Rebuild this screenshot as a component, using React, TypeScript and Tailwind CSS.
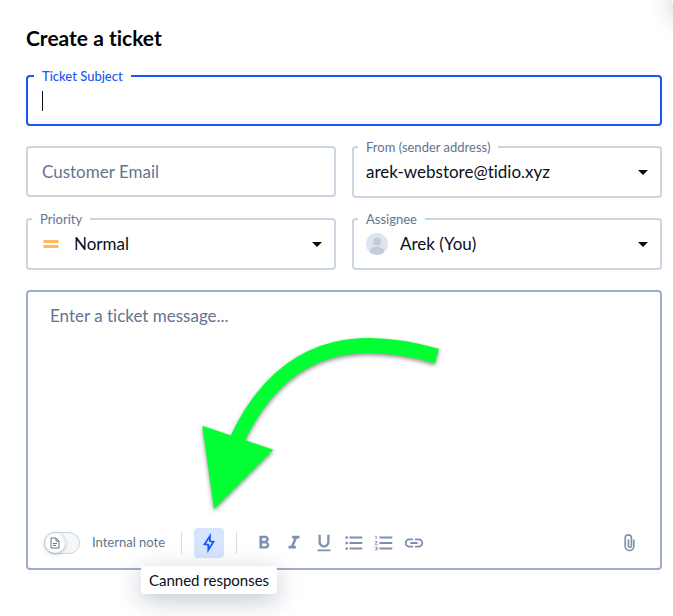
import { useId, useState } from 'react'
import type { ReactNode } from 'react'
import {
  MdFormatBold,
  MdFormatItalic,
  MdFormatListBulleted,
  MdFormatListNumbered,
  MdFormatUnderlined,
  MdLink,
} from 'react-icons/md'

const FORMAT_ACTIONS = [
  { label: 'Bold', Icon: MdFormatBold },
  { label: 'Italic', Icon: MdFormatItalic },
  { label: 'Underline', Icon: MdFormatUnderlined },
  { label: 'Bulleted list', Icon: MdFormatListBulleted },
  { label: 'Numbered list', Icon: MdFormatListNumbered },
  { label: 'Insert link', Icon: MdLink },
]

type SelectFieldProps = {
  label: string
  options: string[]
  icon?: ReactNode
}

function SelectField({ label, options, icon }: SelectFieldProps) {
  const id = useId()
  const [value, setValue] = useState(options[0])

  return (
    <fieldset className="min-w-0 rounded border-2 border-[#cbd5e1]">
      <legend className="ml-1 px-2 text-[13px] leading-4 text-[#647491]">
        <label htmlFor={id}>{label}</label>
      </legend>
      <div className="relative flex h-[41px] items-center pb-2 pl-3">
        {icon}
        <select
          id={id}
          value={value}
          onChange={(event) => setValue(event.target.value)}
          className="h-full min-w-0 flex-1 appearance-none bg-transparent pr-10 text-[17px] text-[#080f1a] outline-none"
        >
          {options.map((option) => (
            <option key={option}>{option}</option>
          ))}
        </select>
        <svg viewBox="0 0 10 5" className="pointer-events-none absolute right-3 top-[15px] h-[5px] w-[10px] fill-[#080f1a]" aria-hidden="true">
          <path d="M0 0h10L5 5z" />
        </svg>
      </div>
    </fieldset>
  )
}

function PriorityIcon() {
  return (
    <svg viewBox="0 0 16 16" className="ml-[3px] mr-[15px] size-4 shrink-0 fill-[#ffb95a]" aria-hidden="true">
      <path d="M.5 4h15v3H.5zM.5 9h15v3H.5z" />
    </svg>
  )
}

function Avatar() {
  return (
    <svg viewBox="0 0 22 22" className="mr-3 size-[22px] shrink-0" aria-hidden="true">
      <circle cx="11" cy="11" r="11" fill="#dce4ed" />
      <circle cx="11" cy="8.5" r="4" fill="#c3ccdd" />
      <path d="M3.7 19.2c0-3.6 3-5.4 7.3-5.4s7.3 1.8 7.3 5.4A11 11 0 0 1 11 22a11 11 0 0 1-7.3-2.8z" fill="#c3ccdd" />
    </svg>
  )
}

function PointerArrow() {
  return (
    <svg
      viewBox="200 330 245 190"
      className="pointer-events-none absolute left-[172px] top-[38px] h-[190px] w-[245px] drop-shadow-[0_2px_2px_rgba(0,0,0,0.45)]"
      aria-hidden="true"
    >
      <path d="M437 356C380 340 290 326 237 440" fill="none" stroke="#00ff33" strokeWidth="15" />
      <path d="M202.3 425.7L273.3 449.7L214 509z" fill="#00ff33" />
    </svg>
  )
}

export default function App() {
  const [subject, setSubject] = useState('')
  const [email, setEmail] = useState('')
  const [message, setMessage] = useState('')
  const [internal, setInternal] = useState(false)

  return (
    <main className="relative min-h-screen overflow-hidden bg-white pb-[46px] pl-[26px] pr-[11px] pt-6 font-['Lato',sans-serif] [font-variant-ligatures:none]">
      <div className="absolute -right-[45px] -top-8 size-12 rounded-full bg-white shadow-[0_8px_24px_rgba(0,27,71,0.2)]" />

      <h1 className="text-[21px] font-bold leading-7 text-black">Create a ticket</h1>

      <form onSubmit={(event) => event.preventDefault()}>
        <fieldset className="mt-4 rounded border-2 border-[#1a56f5]">
          <legend className="ml-[6px] px-2 text-[13px] font-medium leading-4 text-[#1a56f5]">
            <label htmlFor="subject">Ticket Subject</label>
          </legend>
          <div className="flex h-10 items-center pb-[6px] pl-[14px] pr-4">
            {subject === '' && <span className="h-5 w-px bg-[#080f1a]" />}
            <input
              id="subject"
              value={subject}
              onChange={(event) => setSubject(event.target.value)}
              className="h-full min-w-0 flex-1 bg-transparent text-[17px] text-[#080f1a] outline-none"
            />
          </div>
        </fieldset>

        <div className="mt-[13px] grid grid-cols-2 items-start gap-x-4 gap-y-[13px]">
          <input
            type="email"
            aria-label="Customer Email"
            placeholder="Customer Email"
            value={email}
            onChange={(event) => setEmail(event.target.value)}
            className="mt-[7px] h-[51px] min-w-0 rounded border-2 border-[#cbd5e1] px-[14px] text-[17px] text-[#080f1a] outline-none placeholder:text-[#647491]"
          />
          <SelectField label="From (sender address)" options={['arek-webstore@tidio.xyz']} />
          <SelectField label="Priority" options={['Normal', 'Low', 'Urgent']} icon={<PriorityIcon />} />
          <SelectField label="Assignee" options={['Arek (You)', 'Unassigned']} icon={<Avatar />} />
        </div>

        <section className="relative mt-5 rounded border-2 border-[#a0aec4]">
          <textarea
            aria-label="Ticket message"
            placeholder="Enter a ticket message..."
            value={message}
            onChange={(event) => setMessage(event.target.value)}
            className="block h-[236px] w-full resize-none px-[22px] pt-3 text-[17px] leading-6 text-[#080f1a] outline-none placeholder:text-[#647491]"
          />
          <PointerArrow />

          <div className="flex items-center px-4 pb-[10px] text-[#8091af]">
            <label className="flex items-center gap-3 text-[13px] text-[#647491]">
              <input
                type="checkbox"
                role="switch"
                checked={internal}
                onChange={(event) => setInternal(event.target.checked)}
                className="peer sr-only"
              />
              <span className="flex h-[22px] w-9 items-center rounded-full border border-[#cbd5e1] bg-[#f5f7f9] peer-checked:justify-end">
                <span className="flex size-5 items-center justify-center rounded-full bg-white shadow-[0_1px_4px_rgba(0,27,71,0.3)]">
                  <svg viewBox="0 0 12 12" className="size-3 fill-none stroke-[#647491]" aria-hidden="true">
                    <path d="M2 1h5l3 3v7H2zM7 1v3h3M4 6.5h4M4 8.5h3" />
                  </svg>
                </span>
              </span>
              Internal note
            </label>

            <span className="ml-4 mr-3 h-[22px] w-px bg-[#d5dbe4]" />

            <div className="relative">
              <button
                type="button"
                aria-label="Insert canned response"
                aria-describedby="canned-tip"
                className="flex size-[30px] items-center justify-center rounded bg-[#d6e4ff]"
              >
                <svg viewBox="0 0 20 20" className="size-5 fill-none stroke-[#1a56f5] stroke-[1.8]" aria-hidden="true">
                  <path d="M11 3L5.5 11.2l3.8.5V17L14.500 8.800 11 8.300z" />
                </svg>
              </button>
              <div
                id="canned-tip"
                role="tooltip"
                className="absolute left-1/2 top-full z-10 mt-2 -translate-x-1/2 whitespace-nowrap rounded bg-white px-2 py-1 text-[15px] leading-5 text-[#080f1a] shadow-[0_6px_24px_rgba(0,27,71,0.25)]"
              >
                Canned responses
              </div>
            </div>

            <span className="mx-3 h-[22px] w-px bg-[#d5dbe4]" />

            <div className="flex">
              {FORMAT_ACTIONS.map(({ label, Icon }) => (
                <button key={label} type="button" aria-label={label} className="flex size-[30px] items-center justify-center">
                  <Icon size={22} />
                </button>
              ))}
            </div>

            <button type="button" aria-label="Attach a file" className="ml-auto flex size-[30px] items-center justify-center">
              <svg viewBox="0 0 20 20" className="size-5 fill-none stroke-current stroke-[1.7]" aria-hidden="true">
                <path d="M14.8 6.5v6.700a4.300 4.300 0 0 1-8.600 0V5a3.100 3.100 0 0 1 6.200 0v7.800a1.500 1.500 0 0 1-3 0V6.500" />
              </svg>
            </button>
          </div>
        </section>
      </form>
    </main>
  )
}
